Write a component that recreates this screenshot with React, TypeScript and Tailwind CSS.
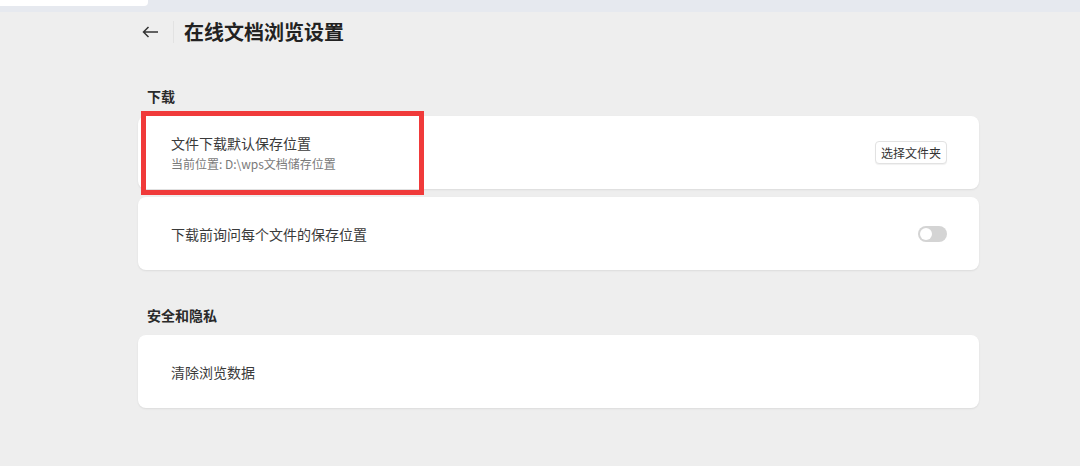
import React from 'react';

const font = "font-['Noto_Sans_CJK_SC','Noto_Sans',sans-serif]";

const Toggle: React.FC = () => (
  <div className="flex h-[16px] w-[29px] items-center rounded-full bg-[#d4d4d4] px-[2px]">
    <div className="h-[12px] w-[12px] rounded-full bg-white" />
  </div>
);

const Card: React.FC<{ children: React.ReactNode; className?: string }> = ({ children, className }) => (
  <div
    className={`flex h-[73px] items-center justify-between rounded-[8px] bg-white pl-[33px] pr-[32px] shadow-[0_1px_2px_rgba(0,0,0,0.08)] ${className ?? ''}`}
  >
    {children}
  </div>
);

export default function App() {
  return (
    <div className={`relative h-[466px] w-[1080px] overflow-hidden bg-[#eeeeee] ${font}`}>
      {/* top strip */}
      <div className="flex h-[12px] bg-[#e6e9ef]">
        <div className="h-[6px] w-[148px] rounded-br-[4px] bg-white" />
      </div>

      <div className="ml-[138px] w-[841px]">
        {/* header */}
        <div className="mt-[7px] flex h-[25px] items-center">
          <svg width="17" height="12" viewBox="0 0 17 12" className="ml-[4px]" fill="none" stroke="#333" strokeWidth="1.5">
            <path d="M16 6H1.5M6.5 1L1.5 6l5 5" />
          </svg>
          <div className="ml-[14px] h-[22px] w-px bg-[#e2e2e2]" />
          <h1 className="ml-[10px] text-[20px] font-bold leading-none text-[#222]">在线文档浏览设置</h1>
        </div>

        {/* download section */}
        <div className="mt-[45px] pl-[9px] text-[14px] font-bold leading-none text-[#2a2a2a]">下载</div>
        <div className="mt-[13px] flex flex-col gap-[8px]">
          <Card>
            <div className="flex flex-col">
              <span className="text-[14px] leading-none text-[#3a3a3a]">文件下载默认保存位置</span>
              <span className="mt-[8px] text-[12px] leading-none text-[#7a7a7a]">当前位置: D:\wps文档储存位置</span>
            </div>
            <button className="h-[23px] rounded-[4px] border border-[#e2e2e2] bg-white px-[5px] text-[12px] leading-none text-[#333] shadow-[0_1px_1px_rgba(0,0,0,0.06)]">
              选择文件夹
            </button>
          </Card>
          <Card>
            <span className="text-[14px] leading-none text-[#3a3a3a]">下载前询问每个文件的保存位置</span>
            <Toggle />
          </Card>
        </div>

        {/* privacy section */}
        <div className="mt-[38px] pl-[9px] text-[14px] font-bold leading-none text-[#2a2a2a]">安全和隐私</div>
        <div className="mt-[13px]">
          <Card>
            <span className="text-[14px] leading-none text-[#3a3a3a]">清除浏览数据</span>
          </Card>
        </div>
      </div>

      {/* annotation highlight */}
      <div className="absolute left-[141px] top-[111px] h-[84px] w-[283px] border-[5px] border-[#f03a3a]" />
    </div>
  );
}
